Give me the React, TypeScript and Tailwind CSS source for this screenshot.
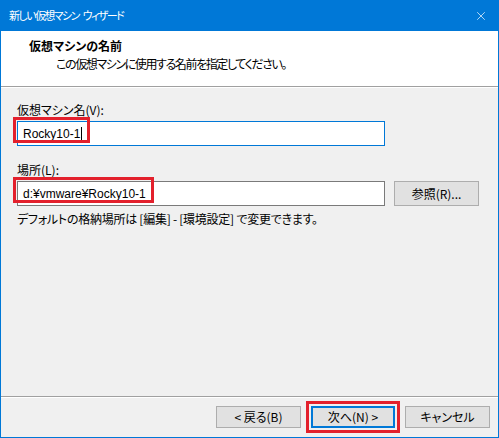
import { X } from "lucide-react";

const jp = "font-['Noto_Sans_CJK_JP',sans-serif] [font-feature-settings:'palt']";
const latin = "font-['Liberation_Sans','Noto_Sans_CJK_JP',sans-serif]";

function WinButton({ label, isDefault }: { label: string; isDefault?: boolean }) {
  return (
    <button
      type="button"
      className={
        isDefault
          ? "flex h-[22px] w-[84px] items-center justify-center border-2 border-[#0078d7] bg-[#e1e1e1] text-[12px] text-black"
          : "flex h-[22px] w-[85px] items-center justify-center border border-[#adadad] bg-[#e1e1e1] text-[12px] text-black"
      }
    >
      {label}
    </button>
  );
}

export default function App() {
  return (
    <div className={`flex h-[438px] w-[499px] flex-col bg-[#0078d7] px-px pb-px ${jp}`}>
      {/* タイトルバー */}
      <div className="flex h-[31px] shrink-0 items-center justify-between pl-[8px] pr-[10px] text-[11px] text-white">
        <span className="flex gap-[4px] tracking-[-1.6px]">
          <span>新しい仮想マシン</span>
          <span>ウィザード</span>
        </span>
        <X className="size-[14px]" strokeWidth={1.2} />
      </div>

      <div className="flex flex-1 flex-col bg-[#f0f0f0]">
        {/* ヘッダー */}
        <div className="h-[56px] shrink-0 border-b border-[#a0a0a0] bg-white pl-[28px] pt-[7px]">
          <div className="text-[12px] font-bold leading-[16px] text-black">仮想マシンの名前</div>
          <div className="pl-[27px] pt-[2px] text-[12px] leading-[16px] tracking-[-1.4px] text-black">
            この仮想マシンに使用する名前を指定してください。
          </div>
        </div>
        <div className="h-px shrink-0 bg-white" />

        {/* 本文 */}
        <div className="flex flex-1 flex-col pl-[16px] pr-[19px] pt-[14px] text-[12px] leading-[16px] text-black">
          <div>仮想マシン名(V):</div>
          <div className="relative mt-[3px] w-[368px]">
            <div className={`flex h-[25px] items-center border border-[#0078d7] bg-white pl-[5px] ${latin}`}>
              <span>Rocky10-1</span>
              <span className="ml-px h-[14px] w-px bg-black" />
            </div>
            <div className="absolute left-[-4px] top-[-4px] h-[26px] w-[77px] border-[3px] border-[#e3202c]" />
          </div>

          <div className="mt-[16px]">場所(L):</div>
          <div className="mt-[3px] flex items-center gap-[9px]">
            <div className="relative w-[368px]">
              <div className={`flex h-[25px] items-center border border-[#7a7a7a] bg-white pl-[5px] ${latin}`}>
                d:¥vmware¥Rocky10-1
              </div>
              <div className="absolute left-[-4px] top-[-4px] h-[26px] w-[141px] border-[3px] border-[#e3202c]" />
            </div>
            <button
              type="button"
              className="flex h-[25px] w-[85px] items-center justify-center border border-[#adadad] bg-[#e1e1e1]"
            >
              参照(R)...
            </button>
          </div>

          <div className="mt-[5px] tracking-[-0.25px]">
            デフォルトの格納場所は [編集] - [環境設定] で変更できます。
          </div>
        </div>

        {/* フッター */}
        <div className="h-px shrink-0 bg-[#a0a0a0]" />
        <div className="h-px shrink-0 bg-white" />
        <div className="flex h-[39px] shrink-0 items-center justify-end gap-[10px] pr-[8px] pb-[1px]">
          <WinButton label="< 戻る(B)" />
          <div className="relative">
            <WinButton label="次へ(N) >" isDefault />
            <div className="absolute inset-[-5px] border-[3px] border-[#e3202c]" />
          </div>
          <WinButton label="キャンセル" />
        </div>
      </div>
    </div>
  );
}
